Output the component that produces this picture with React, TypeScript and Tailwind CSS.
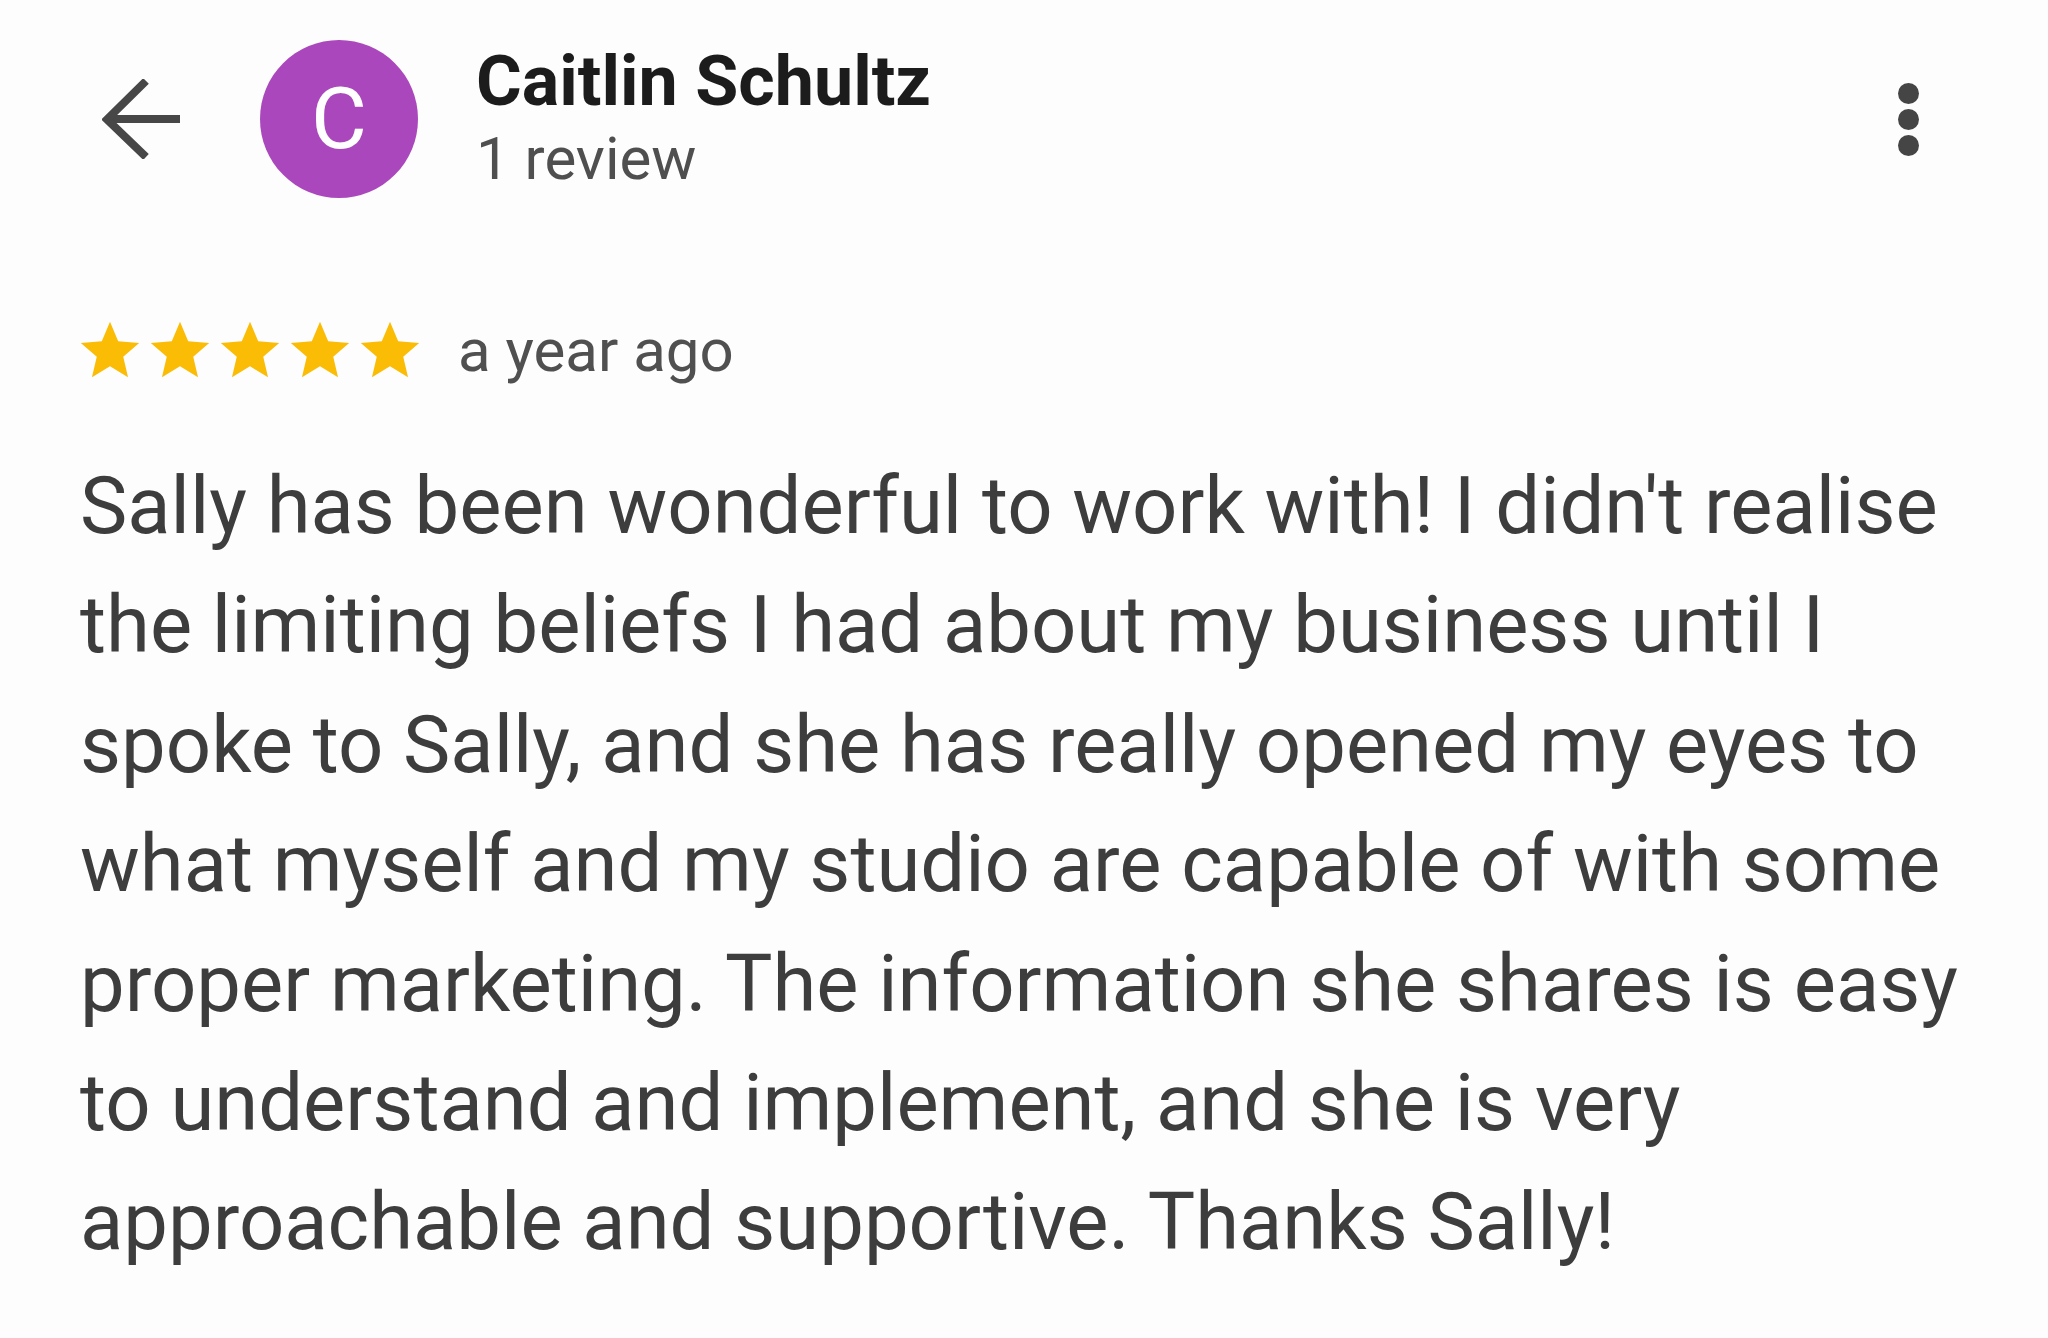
import { useState } from 'react';

const reviewLines = [
  "Sally has been wonderful to work with! I didn't realise",
  'the limiting beliefs I had about my business until I',
  'spoke to Sally, and she has really opened my eyes to',
  'what myself and my studio are capable of with some',
  'proper marketing. The information she shares is easy',
  'to understand and implement, and she is very',
  'approachable and supportive. Thanks Sally!',
];

function BackArrow() {
  return (
    <svg width="80" height="80" viewBox="0 0 80 80" fill="none" className="shrink-0">
      <path d="M78 40H4" stroke="#474747" strokeWidth="8" />
      <path d="M44 2L5 40.5L44 78" stroke="#474747" strokeWidth="8" strokeLinejoin="miter" />
    </svg>
  );
}

function Star() {
  return (
    <svg width="70" height="70" viewBox="0 0 24 24" className="shrink-0">
      <path
        fill="#fbbc05"
        d="M12 17.27L18.18 21l-1.64-7.03L22 9.24l-7.19-.61L12 2 9.19 8.63 2 9.24l5.46 4.73L5.82 21z"
      />
    </svg>
  );
}

export default function App() {
  const [rating] = useState(5);

  return (
    <div
      className="w-full min-h-[1338px] bg-[#fdfdfd] text-[#3c3c3c]"
      style={{ fontFamily: 'Roboto, "Liberation Sans", sans-serif' }}
    >
      {/* header */}
      <div className="flex items-start pt-[40px] pl-[102px] pr-[129px]">
        <div className="h-[158px] flex items-center">
          <BackArrow />
        </div>
        <div className="ml-[78px] w-[158px] h-[158px] rounded-full bg-[#ab47bc] flex items-center justify-center shrink-0">
          <span className="text-white text-[86px] leading-none">C</span>
        </div>
        <div className="ml-[58px] flex-1 flex flex-col">
          <span className="text-[70px] leading-[82px] font-bold text-[#1c1c1c]">Caitlin Schultz</span>
          <span className="mt-[2px] text-[60px] leading-[70px] text-[#4f4f4f]">1 review</span>
        </div>
        <div className="h-[158px] flex flex-col items-center justify-center gap-[5px]">
          <span className="w-[21px] h-[21px] rounded-full bg-[#454545]" />
          <span className="w-[21px] h-[21px] rounded-full bg-[#454545]" />
          <span className="w-[21px] h-[21px] rounded-full bg-[#454545]" />
        </div>
      </div>

      {/* rating row */}
      <div className="flex items-center mt-[118px] pl-[75px]">
        <div className="flex">
          {Array.from({ length: rating }).map((_, i) => (
            <Star key={i} />
          ))}
        </div>
        <span className="ml-[33px] text-[60px] leading-[70px] text-[#505050]">a year ago</span>
      </div>

      {/* review body */}
      <div className="mt-[60px] pl-[80px] text-[79.6px] leading-[119.4px] text-[#3d3d3d]">
        {reviewLines.map((line, i) => (
          <div key={i} className="whitespace-nowrap">
            {line}
          </div>
        ))}
      </div>
    </div>
  );
}
